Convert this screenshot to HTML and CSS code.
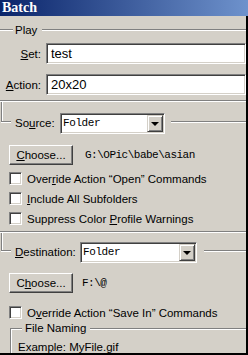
FILE: index.html
```html
<!DOCTYPE html>
<html lang="en">
<head>
  <meta charset="UTF-8">
  <title>Batch</title>
  <link rel="stylesheet" href="styles.css">
</head>
<body>

<div class="window">
  <div class="title">Batch</div>

  <div class="panel">
    <div class="head play-head">
      <span class="line lead"></span>
      <span class="cap">Play</span>
      <span class="line fill"></span>
    </div>

    <div class="field first">
      <span class="lbl"><u>S</u>et:</span>
      <div class="input">test</div>
    </div>
    <div class="field">
      <span class="lbl"><u>A</u>ction:</span>
      <div class="input">20x20</div>
    </div>

    <div class="line sep"></div>
    <div class="drop"></div>

    <div class="head group-head">
      <span class="corner"></span>
      <span class="glbl src-lbl">So<u>u</u>rce:</span>
      <div class="select src-select">
        <span class="sel-text">Folder</span>
        <span class="sel-btn"><span class="arrow"></span></span>
      </div>
      <span class="line tail"></span>
    </div>

    <div class="row choose-row">
      <span class="button"><u>C</u>hoose...</span>
      <span class="path">G:\OPic\babe\asian</span>
    </div>

    <div class="check"><span class="box"></span><span>Over<u>r</u>ide Action “Open” Commands</span></div>
    <div class="check"><span class="box"></span><span><u>I</u>nclude All Subfolders</span></div>
    <div class="check"><span class="box"></span><span>Suppress Color <u>P</u>rofile Warnings</span></div>

    <div class="line sep sep-2"></div>
    <div class="drop drop-2"></div>

    <div class="head group-head">
      <span class="corner"></span>
      <span class="glbl dest-lbl"><u>D</u>estination:</span>
      <div class="select dest-select">
        <span class="sel-text">Folder</span>
        <span class="sel-btn"><span class="arrow"></span></span>
      </div>
      <span class="line tail dest-tail"></span>
    </div>

    <div class="row choose-row-2">
      <span class="button">C<u>h</u>oose...</span>
      <span class="path path-2">F:\@</span>
    </div>

    <div class="check check-last"><span class="box"></span><span>O<u>v</u>erride Action “Save In” Commands</span></div>

    <div class="naming">
      <div class="naming-head">
        <span class="corner-down"></span>
        <span class="cap">File Naming</span>
        <span class="line naming-line"></span>
      </div>
      <div class="naming-body">Example: MyFile.gif</div>
    </div>
  </div>
</div>

</body>
</html>
```

FILE: styles.css
```css
* {
  box-sizing: border-box;
}

body {
  margin: 0;
  background-color: #d4d0c8;
  font-family: "Liberation Sans", Arial, sans-serif;
  font-size: 11.5px;
  color: #000;
}

u {
  text-decoration-thickness: 1px;
  text-underline-offset: 1px;
}

.window {
  width: 248px;
  height: 355px;
  overflow: hidden;
}

.title {
  height: 16px;
  padding-left: 2px;
  background: linear-gradient(to right, #0a246a, #6e92cc);
  color: #fff;
  font: bold 14px/16px "Liberation Serif", serif;
}

.panel {
  height: 339px;
  border-right: 2px solid #000;
  border-bottom: 2px solid #000;
  overflow: hidden;
}

/* etched lines */
.line {
  height: 2px;
  border-top: 1px solid #808080;
  border-bottom: 1px solid #fff;
}

.head {
  display: flex;
}

.play-head {
  margin-top: 7px;
  height: 14px;
  align-items: center;
}

.lead {
  width: 13px;
}

.cap {
  padding: 0 5px 0 2px;
  line-height: 14px;
  white-space: nowrap;
}

.fill {
  flex: 1;
}

.field {
  display: flex;
  align-items: center;
  height: 21px;
  margin-top: 10px;
}

.field.first {
  margin-top: 6px;
}

.lbl {
  width: 60px;
  margin-right: 5px;
  text-align: right;
}

.input {
  flex: none;
  width: 200px;
  height: 21px;
  padding-left: 4px;
  background-color: #fff;
  border: 1px solid;
  border-color: #808080 #fff #fff #808080;
  box-shadow: inset 1px 1px 0 #404040, inset -1px -1px 0 #d4d0c8;
  font-size: 13px;
  line-height: 19px;
}

.sep {
  margin-top: 5px;
}

.sep-2 {
  margin-top: 6px;
}

.drop {
  width: 2px;
  height: 11px;
  margin-left: 1px;
  border-left: 1px solid #808080;
  box-shadow: inset 1px 0 0 #fff;
}

.drop-2 {
  height: 9px;
}

.group-head {
  height: 21px;
  align-items: flex-start;
}

.corner {
  width: 10px;
  height: 9px;
  margin-left: 1px;
  border-left: 1px solid #808080;
  border-bottom: 1px solid #808080;
  box-shadow: inset 1px 0 0 #fff, 0 1px 0 #fff;
}

.glbl {
  margin-left: 4px;
  line-height: 21px;
  white-space: nowrap;
}

.src-lbl {
  width: 45px;
}

.dest-lbl {
  width: 65px;
}

.select {
  display: flex;
  flex: none;
  height: 21px;
  padding: 1px;
  background-color: #fff;
  border: 1px solid;
  border-color: #808080 #fff #fff #808080;
  box-shadow: inset 1px 1px 0 #404040, inset -1px -1px 0 #d4d0c8;
}

.src-select {
  width: 105px;
}

.dest-select {
  width: 117px;
}

.sel-text {
  flex: 1;
  padding-left: 1px;
  font: 11px/17px "Liberation Mono", monospace;
  letter-spacing: -0.4px;
}

.sel-btn {
  display: flex;
  align-items: center;
  justify-content: center;
  width: 16px;
  height: 17px;
  background-color: #d4d0c8;
  border: 1px solid;
  border-color: #d4d0c8 #404040 #404040 #d4d0c8;
  box-shadow: inset 1px 1px 0 #fff, inset -1px -1px 0 #808080;
}

.arrow {
  width: 0;
  height: 0;
  border-left: 4px solid transparent;
  border-right: 4px solid transparent;
  border-top: 4px solid #000;
}

.tail {
  flex: 1;
  margin-left: 6px;
  margin-top: 8px;
}

.dest-tail {
  margin-left: 7px;
}

.row {
  display: flex;
  align-items: center;
  height: 20px;
}

.choose-row {
  margin-top: 11px;
}

.choose-row-2 {
  margin-top: 10px;
}

.button {
  width: 64px;
  height: 20px;
  margin-left: 9px;
  text-align: center;
  line-height: 18px;
  border: 1px solid;
  border-color: #fff #404040 #404040 #fff;
  box-shadow: inset -1px -1px 0 #808080;
}

.path {
  margin-left: 12px;
  font: 11px "Liberation Mono", monospace;
  letter-spacing: -0.5px;
}

.path-2 {
  margin-left: 9px;
}

.check {
  display: flex;
  align-items: center;
  height: 13px;
  margin-top: 7px;
  margin-left: 9px;
  white-space: nowrap;
}

.check-last {
  margin-top: 13px;
}

.box {
  flex: none;
  width: 13px;
  height: 13px;
  margin-right: 5px;
  background-color: #fff;
  border: 1px solid;
  border-color: #808080 #fff #fff #808080;
  box-shadow: inset 1px 1px 0 #404040, inset -1px -1px 0 #d4d0c8;
}

.naming {
  margin-top: 2px;
  margin-left: 10px;
}

.naming-head {
  display: flex;
  height: 14px;
}

.corner-down {
  align-self: flex-end;
  width: 12px;
  height: 7px;
  border-top: 1px solid #808080;
  border-left: 1px solid #808080;
  box-shadow: inset 1px 1px 0 #fff;
}

.naming-head .cap {
  padding: 0 4px 0 3px;
}

.naming-line {
  flex: 1;
  margin-top: 7px;
}

.naming-body {
  height: 30px;
  padding: 5px 0 0 7px;
  border-left: 1px solid #808080;
  box-shadow: inset 1px 0 0 #fff;
  line-height: 14px;
}
```
